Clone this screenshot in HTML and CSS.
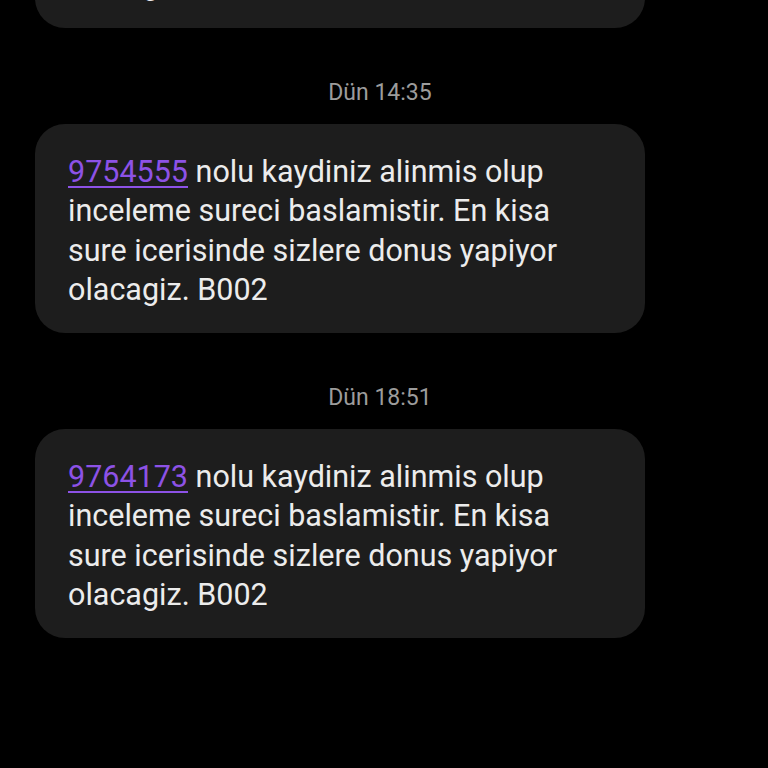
FILE: index.html
```html
<!DOCTYPE html>
<html lang="tr">
<head>
<meta charset="utf-8">
<title>Mesajlar</title>
<link rel="stylesheet" href="styles.css">
</head>
<body>
<main class="thread">
  <div class="bubble">
    <p class="msg"><a class="num" href="#">9744321</a> nolu kaydiniz alinmis olup<br>inceleme sureci baslamistir. En kisa<br>sure icerisinde sizlere donus yapiyor<br>olacagiz. B002</p>
  </div>
  <div class="stamp">Dün 14:35</div>
  <div class="bubble">
    <p class="msg"><a class="num" href="#">9754555</a> nolu kaydiniz alinmis olup<br>inceleme sureci baslamistir. En kisa<br>sure icerisinde sizlere donus yapiyor<br>olacagiz. B002</p>
  </div>
  <div class="stamp">Dün 18:51</div>
  <div class="bubble">
    <p class="msg"><a class="num" href="#">9764173</a> nolu kaydiniz alinmis olup<br>inceleme sureci baslamistir. En kisa<br>sure icerisinde sizlere donus yapiyor<br>olacagiz. B002</p>
  </div>
</main>
</body>
</html>
```
FILE: styles.css
```css
html, body {
  margin: 0;
  padding: 0;
  background: #000;
  height: 100%;
  overflow: hidden;
}
.thread {
  display: flex;
  flex-direction: column;
  align-items: flex-start;
  margin-top: -181px;
  padding-left: 35px;
  font-family: Roboto, "Noto Sans", sans-serif;
}
.bubble {
  box-sizing: border-box;
  width: 610px;
  height: 209px;
  background: #1d1d1d;
  border-radius: 30px;
  padding: 28px 20px 0 33px;
}
.msg {
  margin: 0;
  font-size: 30.5px;
  line-height: 39.3px;
  color: #ececec;
  white-space: nowrap;
}
.num {
  color: #8d52e6;
  text-decoration: underline;
  text-decoration-thickness: 2px;
  text-underline-offset: 4px;
}
.stamp {
  align-self: stretch;
  box-sizing: border-box;
  width: 690px;
  text-align: center;
  font-size: 23px;
  line-height: 28px;
  color: #9c9c9c;
  padding: 51px 0 17px;
}
```
